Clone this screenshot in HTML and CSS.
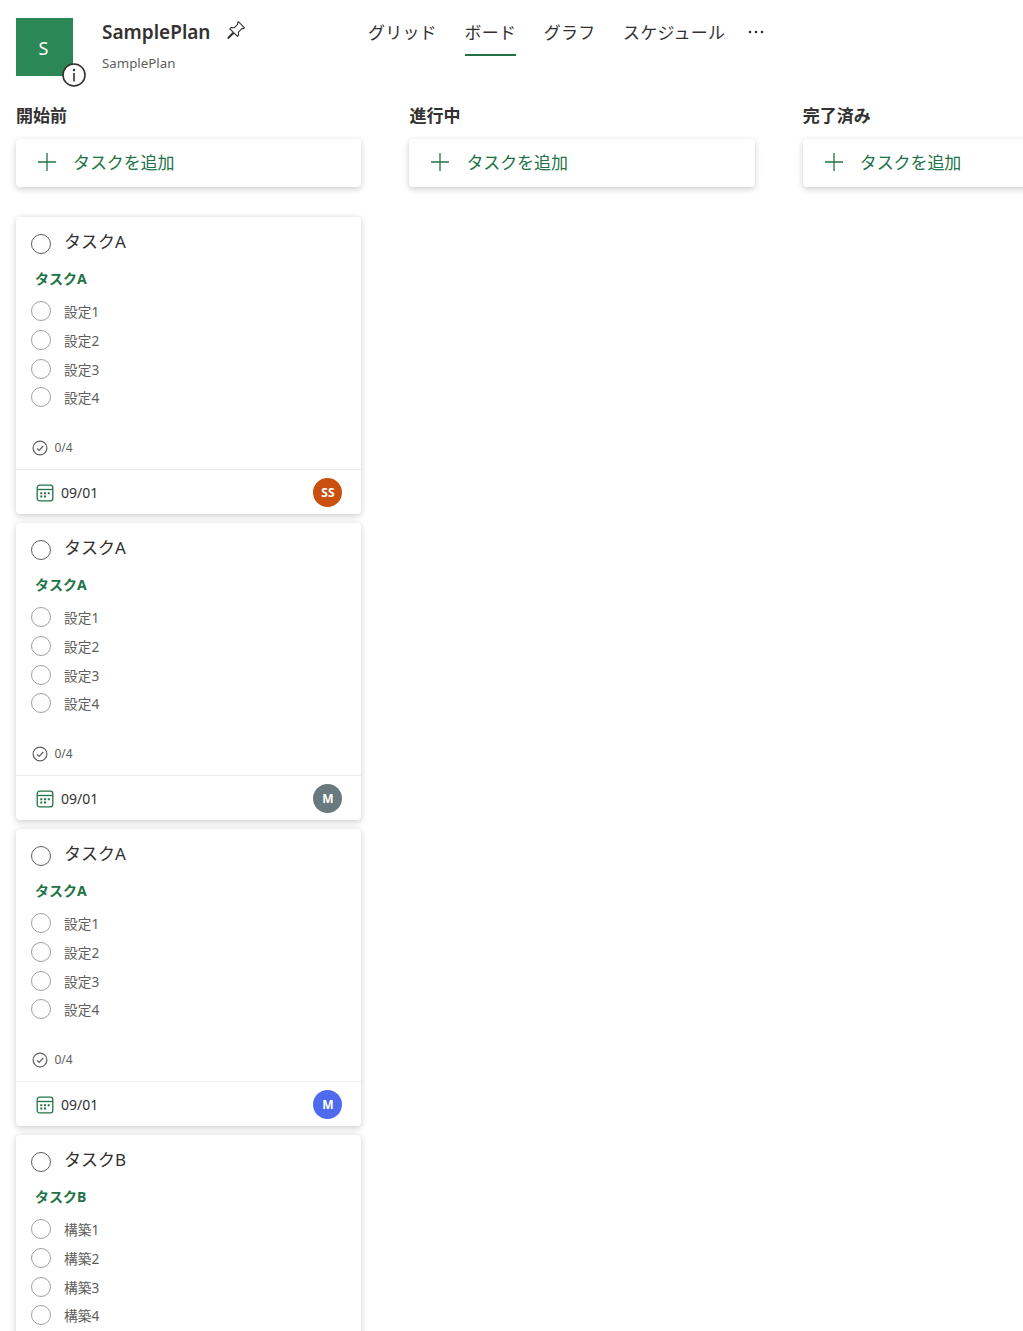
FILE: index.html
```html
<!DOCTYPE html>
<html lang="ja">
<head>
  <meta charset="UTF-8">
  <title>SamplePlan</title>
  <link rel="stylesheet" href="styles.css">
</head>
<body>
  <svg class="defs" width="0" height="0">
    <symbol id="icon-plus" viewBox="0 0 18 18"><path d="M9 0v18M0 9h18" fill="none" stroke="currentColor" stroke-width="1.3"/></symbol>
    <symbol id="icon-done" viewBox="0 0 16 16"><circle cx="8" cy="8" r="6.9" fill="none" stroke="currentColor" stroke-width="1.2"/><path d="M5 8.3l2.1 2.1L11.2 6" fill="none" stroke="currentColor" stroke-width="1.2"/></symbol>
    <symbol id="icon-cal" viewBox="0 0 18 18"><rect x="1.2" y="1.2" width="15.6" height="15.6" rx="2.4" fill="none" stroke="currentColor" stroke-width="1.3"/><path d="M1.2 5.5h15.6" stroke="currentColor" stroke-width="1.3"/><path d="M4.3 8.2h2v2h-2zM8 8.2h2v2H8zM11.7 8.2h2v2h-2zM4.3 11.6h2v2h-2zM8 11.6h2v2H8z" fill="currentColor"/></symbol>
  </svg>

  <header class="topbar">
    <div class="plan-logo">S
      <span class="plan-info">
        <svg viewBox="0 0 24 24" width="24" height="24"><circle cx="12" cy="12" r="11" fill="#fff" stroke="#323130" stroke-width="1.6"/><circle cx="12" cy="7" r="1.2" fill="#323130"/><path d="M12 10v8.5" stroke="#323130" stroke-width="1.6"/></svg>
      </span>
    </div>
    <div class="plan-name">
      <div class="plan-title">SamplePlan
        <svg class="pin" viewBox="0 0 20 20" width="20" height="20"><path d="M12.3 1.6l6.1 6.1-1 1-1.3-.3-3.7 3.7.2 3.1-1.2 1.2-3.4-3.4-5.6 5.4-.6-.6 5.4-5.6-3.4-3.4L5 7.6l3.1.2 3.7-3.7-.3-1.3z" fill="none" stroke="#323130" stroke-width="1.1" stroke-linejoin="round"/></svg>
      </div>
      <div class="plan-sub">SamplePlan</div>
    </div>
    <nav class="tabs">
      <a class="tab">グリッド</a>
      <a class="tab active">ボード</a>
      <a class="tab">グラフ</a>
      <a class="tab">スケジュール</a>
      <a class="tab-more"><svg viewBox="0 0 16 4" width="16" height="4"><circle cx="2" cy="2" r="1.3"/><circle cx="8" cy="2" r="1.3"/><circle cx="14" cy="2" r="1.3"/></svg></a>
    </nav>
  </header>

  <main class="board">
    <section class="column">
      <h2>開始前</h2>
      <div class="add-task"><svg width="18" height="18"><use href="#icon-plus"/></svg><span>タスクを追加</span></div>

      <div class="card-list">
        <article class="card">
          <div class="card-head"><span class="check main"></span><span class="card-title">タスクA</span></div>
          <div class="card-label">タスクA</div>
          <ul class="checklist">
            <li><span class="check"></span>設定1</li>
            <li><span class="check"></span>設定2</li>
            <li><span class="check"></span>設定3</li>
            <li><span class="check"></span>設定4</li>
          </ul>
          <div class="progress"><svg width="16" height="16"><use href="#icon-done"/></svg>0/4</div>
          <div class="card-foot">
            <svg class="cal" width="18" height="18"><use href="#icon-cal"/></svg><span class="date">09/01</span>
            <span class="avatar orange">SS</span>
          </div>
        </article>

        <article class="card">
          <div class="card-head"><span class="check main"></span><span class="card-title">タスクA</span></div>
          <div class="card-label">タスクA</div>
          <ul class="checklist">
            <li><span class="check"></span>設定1</li>
            <li><span class="check"></span>設定2</li>
            <li><span class="check"></span>設定3</li>
            <li><span class="check"></span>設定4</li>
          </ul>
          <div class="progress"><svg width="16" height="16"><use href="#icon-done"/></svg>0/4</div>
          <div class="card-foot">
            <svg class="cal" width="18" height="18"><use href="#icon-cal"/></svg><span class="date">09/01</span>
            <span class="avatar gray">M</span>
          </div>
        </article>

        <article class="card">
          <div class="card-head"><span class="check main"></span><span class="card-title">タスクA</span></div>
          <div class="card-label">タスクA</div>
          <ul class="checklist">
            <li><span class="check"></span>設定1</li>
            <li><span class="check"></span>設定2</li>
            <li><span class="check"></span>設定3</li>
            <li><span class="check"></span>設定4</li>
          </ul>
          <div class="progress"><svg width="16" height="16"><use href="#icon-done"/></svg>0/4</div>
          <div class="card-foot">
            <svg class="cal" width="18" height="18"><use href="#icon-cal"/></svg><span class="date">09/01</span>
            <span class="avatar blue">M</span>
          </div>
        </article>

        <article class="card">
          <div class="card-head"><span class="check main"></span><span class="card-title">タスクB</span></div>
          <div class="card-label">タスクB</div>
          <ul class="checklist">
            <li><span class="check"></span>構築1</li>
            <li><span class="check"></span>構築2</li>
            <li><span class="check"></span>構築3</li>
            <li><span class="check"></span>構築4</li>
          </ul>
        </article>
      </div>
    </section>

    <section class="column">
      <h2>進行中</h2>
      <div class="add-task"><svg width="18" height="18"><use href="#icon-plus"/></svg><span>タスクを追加</span></div>
    </section>

    <section class="column">
      <h2>完了済み</h2>
      <div class="add-task"><svg width="18" height="18"><use href="#icon-plus"/></svg><span>タスクを追加</span></div>
    </section>
  </main>
</body>
</html>
```

FILE: styles.css
```css
html, body {
  height: 100%;
  overflow: hidden;
}

body {
  margin: 0;
  background-color: #ffffff;
  color: #323130;
  font-family: "Noto Sans", "Noto Sans CJK JP", sans-serif;
}

.defs {
  display: block;
  height: 0;
}

.topbar {
  display: flex;
  align-items: flex-start;
  height: 104px;
  padding: 18px 0 0 16px;
  box-sizing: border-box;
}

.plan-logo {
  position: relative;
  display: flex;
  align-items: center;
  justify-content: center;
  flex: none;
  width: 57px;
  height: 58px;
  padding: 2px 2px 0 0;
  box-sizing: border-box;
  background-color: #2b8856;
  color: #ffffff;
  font-size: 18px;
}

.plan-info {
  position: absolute;
  right: -12.5px;
  bottom: -11px;
  width: 24px;
  height: 24px;
}

.plan-info svg {
  display: block;
}

.plan-name {
  flex: none;
  width: 266px;
  margin-left: 29px;
}

.plan-title {
  display: flex;
  align-items: center;
  height: 28px;
  font-size: 19px;
  font-weight: 600;
  color: #323130;
}

.pin {
  margin-left: 15px;
  margin-top: -4px;
}

.plan-sub {
  margin-top: 8px;
  font-size: 13.3px;
  line-height: 18px;
  color: #605e5c;
}

.tabs {
  display: flex;
  align-items: flex-start;
  gap: 27.7px;
}

.tab {
  display: block;
  height: 38px;
  box-sizing: border-box;
  font-size: 17px;
  line-height: 29px;
  letter-spacing: 0.2px;
  color: #323130;
}

.tab.active {
  border-bottom: 2px solid #217346;
}

.tab-more {
  margin-left: -5px;
  margin-top: 10px;
  line-height: 0;
  fill: #323130;
}

.board {
  display: flex;
  gap: 48px;
  padding-left: 16px;
}

.column {
  flex: none;
  width: 345.4px;
}

.column h2 {
  height: 21px;
  margin: 0 0 13px;
  padding-top: 1px;
  font-size: 17px;
  font-weight: 700;
  line-height: 22px;
  color: #323130;
}

.add-task {
  display: flex;
  align-items: center;
  height: 46px;
  padding: 0 0 2px 22px;
  background-color: #ffffff;
  border-radius: 4px;
  box-shadow: 0 2px 6px rgba(0, 0, 0, 0.2);
  color: #217346;
  font-size: 17px;
}

.add-task span {
  margin-left: 17px;
  margin-top: -2px;
  letter-spacing: -0.1px;
}

.card-list {
  display: flex;
  flex-direction: column;
  gap: 9px;
  margin-top: 30px;
}

.card {
  height: 297px;
  background-color: #ffffff;
  border-radius: 4px;
  box-shadow: 0 1.5px 6px rgba(0, 0, 0, 0.2);
}

.card-head {
  display: flex;
  align-items: center;
  height: 50px;
  padding-left: 15px;
}

.card-title {
  margin-left: 13px;
  margin-top: -3px;
  font-size: 17px;
  color: #323130;
}

.check {
  flex: none;
  width: 20px;
  height: 20px;
  box-sizing: border-box;
  border: 1px solid #a19f9d;
  border-radius: 50%;
}

.check.main {
  margin-top: 3px;
  border: 1.5px solid #605e5c;
}

.card-label {
  height: 22px;
  margin-top: 1px;
  margin-left: 19px;
  font-size: 14px;
  font-weight: 700;
  line-height: 22px;
  color: #217346;
}

.checklist {
  list-style: none;
  margin: 7px 0 0;
  padding: 0 0 0 15px;
}

.checklist li {
  display: flex;
  align-items: center;
  height: 28.67px;
  font-size: 13.7px;
  color: #605e5c;
}

.checklist .check {
  margin-right: 13px;
}

.progress {
  display: flex;
  align-items: center;
  gap: 7px;
  height: 22px;
  margin-top: 25px;
  padding-left: 15.5px;
  font-size: 12px;
  color: #605e5c;
}

.card-foot {
  display: flex;
  align-items: center;
  height: 44px;
  margin-top: 10px;
  padding: 1px 19px 0 20px;
  box-sizing: content-box;
  border-top: 1px solid #edebe9;
}

.cal {
  color: #217346;
}

.date {
  margin-left: 7px;
  font-size: 14px;
  color: #323130;
}

.avatar {
  display: flex;
  align-items: center;
  justify-content: center;
  width: 29px;
  height: 29px;
  margin-left: auto;
  border-radius: 50%;
  color: #ffffff;
  font-size: 12px;
  font-weight: 700;
}

.orange {
  background-color: #ca5010;
}

.gray {
  background-color: #69797e;
}

.blue {
  background-color: #4f6bed;
}
```
